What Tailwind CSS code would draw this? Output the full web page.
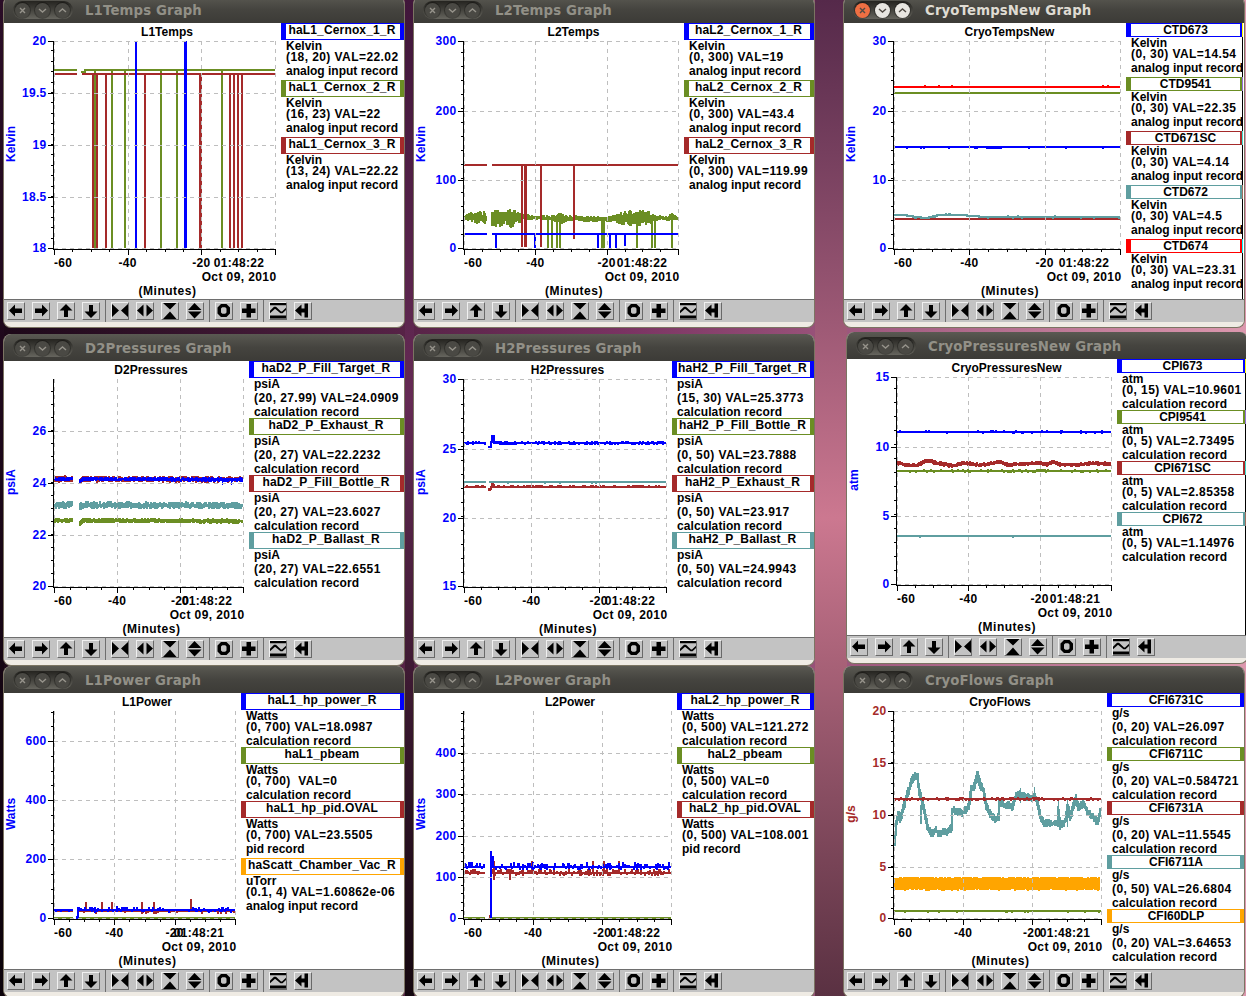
<!DOCTYPE html>
<html lang="en">
<head>
  <meta charset="UTF-8" />
  <meta name="viewport" content="width=device-width, initial-scale=1.0"/>
  <title>Strip charts</title>
  <script src="https://cdn.jsdelivr.net/npm/@tailwindcss/browser@4"></script>
</head>
<body class="relative w-[1246px] h-[996px] overflow-hidden bg-linear-to-r from-[#1c0818] via-[#7a3362] to-[#dc98ae] font-['Liberation_Sans',Arial,sans-serif]">

  <!-- Wallpaper showing between the window columns -->
  <div class="absolute left-0 top-0 w-1 h-full bg-linear-to-b from-[#2a0d26] to-[#0c030a]"></div>
  <div class="absolute left-[405px] top-0 w-[9px] h-full bg-linear-to-b from-[#40163a] via-[#652a54] via-40% to-[#150810]"></div>
  <div class="absolute left-[815px] top-0 w-[32px] h-full bg-linear-to-b from-[#55294a] via-[#cc7890] via-52% to-[#5a3142]"></div>

  <div id="desktop"></div>

  <script>
    const BLUE = "#0000ff", GREEN = "#6b8e23", BROWN = "#a52a2a", TEAL = "#5f9ea0", ORANGE = "#ffa500", RED = "#ff0000";
    const COLORS = [BLUE, GREEN, BROWN, TEAL];

    let seed = 7;
    function rnd() {
      seed = (seed * 16807) % 2147483647;
      return seed / 2147483647;
    }

    function at(pts, x) {
      if (typeof pts === "number") return pts;
      for (let i = 1; i < pts.length; i++) {
        const a = pts[i - 1], b = pts[i];
        if (x <= b[0]) return a[1] + (b[1] - a[1]) * (x - a[0]) / (b[0] - a[0]);
      }
      return pts[pts.length - 1][1];
    }

    // overlapping 2px wide vertical strokes between y-up and y+down
    function noisy(color, pts, x0, x1, up = 0, down = 0, p = 1) {
      let d = "";
      for (let x = x0; x < x1 - 1; x++) {
        const y = at(pts, x), next = at(pts, x + 1);
        const u = rnd() < p ? rnd() * at(up, x) : 0, w = rnd() < p ? rnd() * at(down, x) : 0;
        d += `M${x + 1} ${Math.round(Math.min(y, next) - 1 - u)}V${Math.round(Math.max(y, next) + 1 + w)}`;
      }
      return `<path d="${d}" stroke="${color}" stroke-width="2" fill="none"/>`;
    }

    function bars(color, xs, y0, y1, w = 2) {
      return xs.map(x => `<path d="M${x} ${y0}V${y1}" stroke="${color}" stroke-width="${w}"/>`).join("");
    }

    const flow = [[50,149],[52,130],[54,120],[56,127],[59,114],[63,100],[66,92],[69,84],[73,83],[75,100],[78,110],[81,124],[83,134],[87,142],[91,137],[96,142],[99,137],[103,140],[107,135],[108,117],[113,119],[118,120],[123,115],[125,110],[127,94],[129,95],[133,82],[136,92],[139,97],[142,114],[146,122],[151,127],[154,124],[155,110],[163,112],[168,114],[171,104],[176,100],[181,104],[186,105],[190,104],[193,109],[196,124],[199,130],[204,130],[213,130],[214,117],[216,133],[221,127],[223,114],[226,124],[231,105],[234,114],[239,110],[244,120],[249,124],[253,129],[257,114]];

    const windows = [
      {
        x: 3, y: -4, title: "L1Temps", unit: "Kelvin", legend: 277, div: 5, time: "01:48:22",
        yl: [["20", 18], ["19.5", 70], ["19", 122], ["18.5", 174], ["18", 225]],
        items: [["haL1_Cernox_1_R", "Kelvin", "(18, 20) VAL=22.02", "analog input record"],
                ["haL1_Cernox_2_R", "Kelvin", "(16, 23) VAL=22", "analog input record"],
                ["haL1_Cernox_3_R", "Kelvin", "(13, 24) VAL=22.22", "analog input record"]],
        plot: () => noisy(GREEN, 47, 50, 73) + noisy(GREEN, [[77, 49], [80, 49], [81, 47], [271, 47]], 77, 271) +
          bars(GREEN, [91, 108, 121, 157, 173, 218], 47, 225) +
          noisy(BROWN, 51, 50, 73) + noisy(BROWN, 51, 78, 271) +
          bars(BROWN, [89, 93, 102, 141, 226, 230, 234, 238], 51, 225) + bars(BROWN, [196.5], 51, 225, 3) +
          bars(BLUE, [132], 18, 225) + bars(BLUE, [181.5], 18, 225, 3)
      },
      {
        x: 413, y: -4, title: "L2Temps", unit: "Kelvin", legend: 270, div: 5, time: "01:48:22",
        yl: [["300", 18], ["200", 88], ["100", 157], ["0", 225]],
        items: [["haL2_Cernox_1_R", "Kelvin", "(0, 300) VAL=19", "analog input record"],
                ["haL2_Cernox_2_R", "Kelvin", "(0, 300) VAL=43.4", "analog input record"],
                ["haL2_Cernox_3_R", "Kelvin", "(0, 300) VAL=119.99", "analog input record"]],
        plot: () => {
          const amp = [[50, 1], [54, 4], [60, 6], [70, 6], [73, 5], [77, 9], [86, 9], [90, 6], [96, 10], [104, 6], [108, 2], [125, 1.5], [135, 2], [146, 5], [154, 2], [172, 3], [190, 1.5], [200, 4], [212, 7], [225, 8], [236, 6], [243, 2], [250, 1], [257, 4], [264, 1]];
          const mid = [[50, 194], [80, 195], [110, 194], [130, 195], [180, 196], [195, 196], [215, 195], [264, 195]];
          const core = amp.map(([x, a]) => [x, Math.max(0, a - 3.5)]);
          return [[50, 73], [77, 264]].map(([a, b]) => noisy(GREEN, mid, a, b, amp, amp) +
            core.slice(1).map((_, i) => [core[i], core[i + 1]]).filter(([s, e]) => s[0] >= a && e[0] <= b)
              .map(([s, e]) => `<path fill="${GREEN}" d="M${s[0]} ${194.5 - s[1]}L${e[0]} ${194.5 - e[1]}V${195 + e[1]}L${s[0]} ${195 + s[1]}Z"/>`).join("")).join("") +
            bars(GREEN, [134, 138, 143, 146, 223, 238, 241, 258], 195, 225) + bars(GREEN, [189], 195, 225, 4) +
            noisy(BROWN, 142, 50, 73) + noisy(BROWN, 142, 78, 264) +
            bars(BROWN, [108, 127], 142, 224) + bars(BROWN, [111.5], 142, 224, 3) + bars(BROWN, [160], 142, 216) +
            noisy(BLUE, 211, 50, 73) + noisy(BLUE, 211, 78, 264) + bars(BLUE, [82, 121, 184, 196, 202], 211, 225) + bars(BLUE, [211], 211, 223);
        }
      },
      {
        x: 843, y: -4, title: "CryoTempsNew", unit: "Kelvin", legend: 282, div: 5, time: "01:48:22", active: true,
        edge: ["#ffff00", "#9370db", "#40e0d0", "#a07060", "#00ffff"],
        yl: [["30", 18], ["20", 88], ["10", 157], ["0", 225]],
        colors: [BLUE, GREEN, BROWN, TEAL, RED],
        items: [["CTD673", "Kelvin", "(0, 30) VAL=14.54", "analog input record"],
                ["CTD9541", "Kelvin", "(0, 30) VAL=22.35", "analog input record"],
                ["CTD671SC", "Kelvin", "(0, 30) VAL=4.14", "analog input record"],
                ["CTD672", "Kelvin", "(0, 30) VAL=4.5", "analog input record"],
                ["CTD674", "Kelvin", "(0, 30) VAL=23.31", "analog input record"]],
        plot: () => noisy(RED, 64, 50, 276, 1, 0, .03) + noisy(GREEN, 70, 50, 276) + noisy(BLUE, 124, 50, 276, 0, 1, .08) + bars(BLUE, [150], 124, 126, 16) +
          noisy(BROWN, 196, 50, 276) + noisy(TEAL, [[50, 192], [60, 192], [72, 194], [82, 195], [95, 192], [117, 192], [140, 194], [276, 194]], 50, 276, 1, 1, .05)
      },
      {
        x: 3, y: 334, title: "D2Pressures", unit: "psiA", legend: 245, div: 4, time: "01:48:22",
        yl: [["26", 70], ["24", 122], ["22", 174], ["20", 225]],
        items: [["haD2_P_Fill_Target_R", "psiA", "(20, 27.99) VAL=24.0909", "calculation record"],
                ["haD2_P_Exhaust_R", "psiA", "(20, 27) VAL=22.2232", "calculation record"],
                ["haD2_P_Fill_Bottle_R", "psiA", "(20, 27) VAL=23.6027", "calculation record"],
                ["haD2_P_Ballast_R", "psiA", "(20, 27) VAL=22.6551", "calculation record"]],
        plot: () => [[50, 69], [75, 239]].map(([a, b]) => {
          const k = y => a === 75 ? [[75, y + 3], [78, y], [239, y + .6]] : y;
          return noisy(BROWN, k(118), a, b, 2.6, 2.6) + noisy(BLUE, k(118), a, b, 1.3, 1.3) +
            noisy(TEAL, k(144), a, b, 2.9, 2.9) + noisy(GREEN, k(159.5), a, b, 1.7, 1.7);
        }).join("") + bars(BLUE, [218, 227], 119, 124, 1)
      },
      {
        x: 413, y: 334, title: "H2Pressures", unit: "psiA", legend: 258, div: 5, time: "01:48:22",
        yl: [["30", 18], ["25", 88], ["20", 157], ["15", 225]],
        items: [["haH2_P_Fill_Target_R", "psiA", "(15, 30) VAL=25.3773", "calculation record"],
                ["haH2_P_Fill_Bottle_R", "psiA", "(0, 50) VAL=23.7888", "calculation record"],
                ["haH2_P_Exhaust_R", "psiA", "(0, 50) VAL=23.917", "calculation record"],
                ["haH2_P_Ballast_R", "psiA", "(0, 50) VAL=24.9943", "calculation record"]],
        plot: () => noisy(TEAL, 121, 50, 72) + noisy(TEAL, 121, 75, 252, 0, 1, .04) +
          noisy(GREEN, 126, 50, 72) + noisy(GREEN, 126, 79, 252) +
          noisy(BROWN, 125.6, 50, 72, 1, 0, .4) + noisy(BROWN, [[74, 129], [76, 128], [78, 123], [80, 125.6], [252, 125.6]], 74, 252, 1, 0, .3) +
          noisy(BLUE, 82, 50, 72, 1, 1, .5) + noisy(BLUE, [[74, 86], [76, 86], [78, 75], [79, 75], [80, 82], [252, 82]], 74, 252, 1, 1.2, .45)
      },
      {
        x: 846, y: 332, title: "CryoPressuresNew", unit: "atm", legend: 270, div: 5, time: "01:48:21",
        edge: ["#ffff00", "#9370db", "#40e0d0", "#a07060"],
        yl: [["15", 18], ["10", 88], ["5", 157], ["0", 225]],
        items: [["CPI673", "atm", "(0, 15) VAL=10.9601", "calculation record"],
                ["CPI9541", "atm", "(0, 5) VAL=2.73495", "calculation record"],
                ["CPI671SC", "atm", "(0, 5) VAL=2.85358", "calculation record"],
                ["CPI672", "atm", "(0, 5) VAL=1.14976", "calculation record"]],
        plot: () => noisy(BLUE, 73, 50, 264, 1, 1, .15) + noisy(GREEN, 112, 50, 264, 1, 1, .22) + noisy(TEAL, 177, 50, 264, 0, 1, .02) +
          noisy(BROWN, [[50, 104], [60, 106], [70, 106], [78, 102], [83, 102], [90, 104], [105, 107], [116, 104], [132, 106], [146, 104], [152, 103], [160, 106], [175, 105], [192, 104], [200, 106], [205, 103], [216, 106], [230, 106], [242, 104], [264, 105]], 50, 264, 1.4, 1.4)
      },
      {
        x: 3, y: 666, title: "L1Power", unit: "Watts", legend: 237, div: 4, time: "01:48:21",
        yl: [["600", 48], ["400", 107], ["200", 166], ["0", 225]],
        colors: [BLUE, GREEN, BROWN, ORANGE],
        items: [["haL1_hp_power_R", "Watts", "(0, 700) VAL=18.0987", "calculation record"],
                ["haL1_pbeam", "Watts", "(0, 700) &nbsp;VAL=0", "calculation record"],
                ["haL1_hp_pid.OVAL", "Watts", "(0, 700) VAL=23.5505", "pid record"],
                ["haScatt_Chamber_Vac_R", "uTorr", "(0.1, 4) VAL=1.60862e-06", "analog input record"]],
        plot: () => noisy(GREEN, 225, 50, 69) + noisy(GREEN, 225, 74, 231) +
          noisy(BROWN, 217.5, 50, 69, 0, 1.5, .2) + noisy(BROWN, 217.5, 75, 231, 1, 2.6, .25) +
          bars(BROWN, [82, 98, 108, 138, 150], 208.5, 217) + bars(BROWN, [187], 206, 217) +
          noisy(BLUE, 217, 50, 69, 2.5, 1, .2) + noisy(BLUE, [[72, 224], [73, 224], [74, 215], [76, 217], [231, 217]], 72, 231, 2.6, 1.6, .25)
      },
      {
        x: 413, y: 666, title: "L2Power", unit: "Watts", legend: 263, div: 5, time: "01:48:22",
        yl: [["400", 60], ["300", 101], ["200", 143], ["100", 184], ["0", 225]],
        items: [["haL2_hp_power_R", "Watts", "(0, 500) VAL=121.272", "calculation record"],
                ["haL2_pbeam", "Watts", "(0, 500) VAL=0", "calculation record"],
                ["haL2_hp_pid.OVAL", "Watts", "(0, 500) VAL=108.001", "pid record"]],
        plot: () => noisy(GREEN, 225, 50, 71) + noisy(GREEN, 225, 77, 257) +
          noisy(BROWN, 179.5, 50, 71, 2.5, 2, .4) + noisy(BROWN, 179.5, 77, 257, 3, 3, .3) +
          bars(BROWN, [80, 118, 179, 190, 204.5], 168, 180) + bars(BROWN, [80, 96], 180, 187) + bars(BROWN, [75.5], 222, 225) +
          noisy(BLUE, 173.5, 50, 71, 4, 2, .5) + noisy(BLUE, 173.5, 77, 257, 3.2, 2.6, .35) +
          bars(BLUE, [77], 158, 224.5) + bars(BLUE, [79], 163, 174)
      },
      {
        x: 843, y: 666, title: "CryoFlows", unit: "g/s", legend: 263, div: 5, time: "01:48:21", axis: BROWN,
        yl: [["20", 18], ["15", 70], ["10", 122], ["5", 174], ["0", 225]],
        colors: [BLUE, GREEN, BROWN, TEAL, ORANGE],
        items: [["CFI6731C", "g/s", "(0, 20) VAL=26.097", "calculation record"],
                ["CFI6711C", "g/s", "(0, 20) VAL=0.584721", "calculation record"],
                ["CFI6731A", "g/s", "(0, 20) VAL=11.5545", "calculation record"],
                ["CFI6711A", "g/s", "(0, 50) VAL=26.6804", "calculation record"],
                ["CFI60DLP", "g/s", "(0, 20) VAL=3.64653", "calculation record"]],
        plot: () => noisy(TEAL, flow, 50, 257, 3.4, 3.4) +
          bars(TEAL, [77], 112, 131) + bars(TEAL, [176], 95, 110, 1) + bars(TEAL, [190], 94, 108, 1) + bars(TEAL, [214, 223], 107, 134, 1) +
          noisy(BROWN, 106, 50, 257, 1, 1, .35) +
          `<path d="M50 190.5H256" stroke="${ORANGE}" stroke-width="11"/>` +
          noisy(ORANGE, 186, 50, 256, 1.4, 0) + noisy(ORANGE, 195, 50, 256, 0, 1.6) +
          noisy(GREEN, 218, 50, 257, 0, 1.4, .1)
      }
    ];

    function chart(w) {
      const R = w.legend - 6, L = 50, B = 225, axis = w.axis || BLUE;
      let grid = "", ticks = "", labels = "";
      const step = w.yl[1][1] - w.yl[0][1];
      const third = (R - L) / 3;
      for (let i = 0; i < 4; i++) grid += `<path d="M${Math.round(L + third * i) + .5} 18V${B}"/>`;
      for (const [t, y] of w.yl) {
        grid += `<path d="M${L} ${y + .5}H${R}"/>`;
        ticks += `<path d="M44 ${y + .5}H50"/>`;
        labels += `<text x="42.5" y="${y + 4}" text-anchor="end" fill="${axis}" letter-spacing=".3">${t}</text>`;
      }
      for (let y = B, s = step / w.div; y >= 17.5; y -= s) ticks += `<path d="M47 ${Math.round(y) + .5}H50"/>`;
      for (let i = 0; i <= 12; i++) ticks += `<path d="M${Math.round(L + third * i / 4) + .5} 226V${i % 4 ? 229 : 232}"/>`;
      const mid = (L + R) / 2 + 2.5;
      return `<svg class="shrink-0 block" width="${w.legend}" height="276" font-size="12" font-weight="700">
        <g shape-rendering="crispEdges">${w.plot()}
          <g stroke="#bebebe" stroke-dasharray="4 4" fill="none">${grid}</g>
          <g stroke="#000">${ticks}<path d="M49.5 18V227M49 226.5H${R + 1}"/></g>
        </g>
        ${labels}
        <text x="${mid}" y="13" text-anchor="middle">${w.title}</text>
        <text x="50" y="244" letter-spacing=".3">-60</text>
        <text x="${L + third}" y="244" text-anchor="middle" letter-spacing=".3">-40</text>
        <text x="${L + third * 2}" y="244" text-anchor="middle" letter-spacing=".3">-20</text>
        <text x="${R - 36}" y="244" text-anchor="middle" letter-spacing=".3">${w.time}</text>
        <text x="${R + 1.5}" y="258" text-anchor="end" letter-spacing=".4">Oct 09, 2010</text>
        <text x="${mid + .5}" y="272" text-anchor="middle" letter-spacing=".5">(Minutes)</text>
        <text transform="translate(11 121) rotate(-90)" text-anchor="middle" fill="${axis}">${w.unit}</text>
      </svg>`;
    }

    // line heights follow the ink: rows with descenders are 3px taller
    function legend(w) {
      const colors = w.colors || COLORS;
      return w.items.map(([name, unit, range, rec], i) => {
        const tall = name.includes("_");
        return `<div class="relative">
          <div class="${tall ? "h-[17px] tracking-[.15px] pr-0.5" : "h-[14px]"} ${w.edge ? "border-r-2" : "border-r-4"} border-l-5 border-y leading-[13px] flex justify-center" style="border-color:${colors[i]}"><span>${name}</span></div>
          <p class="-mt-px pl-[5px] ${/[pg]/.test(unit) ? "h-[14px]" : "h-[11px]"}">${unit}</p>
          <p class="pl-[5px] h-[14px] tracking-[.43px]">${range}</p>
          <p class="pl-[5px] overflow-x-clip ${/[pg]/.test(rec) ? "h-4" : "h-[13px] tracking-[.1px]"}">${rec}</p>
          ${w.edge ? `<div class="absolute top-0 -right-px w-px h-[14px]" style="background:${w.edge[i]}"></div>` : ""}
        </div>`;
      }).join("");
    }

    const icons = [
      ["M2 8.5L8 2.5V6.5H15V11H8V14.5Z", "M16 8.5L10 2.5V6.5H3V11H10V14.5Z", "M9 2L15.5 8.5H11V15H7V8.5H2.5Z", "M9 16L15.5 9.5H11V3H7V9.5H2.5Z"],
      ["M1 2L8 8.5L1 15ZM17 2L10 8.5L17 15Z", "M1 8.5L7.5 2.5V14.5ZM10.5 2.5L17 8.5L10.5 14.5Z", "M2 1H15.5L9 7.5ZM9 9.5L15.5 17H2Z", "M8.5 1L15.5 8H2ZM2 9.5H15.5L8.5 16.5Z"],
      ["M6 2H11.5L15 5.5V11.5L11.5 15H6L2.5 11.5V5.5ZM7.3 5.3L6 6.6V10.4L7.3 11.7H10.2L11.5 10.4V6.6L10.2 5.3Z", "M6.5 2H11V6.5H15.5V11H11V15.5H6.5V11H2V6.5H6.5Z"],
      ["M1 1H17V3.2H1ZM1 13.5H17V16.5H1ZM1 8.8L5 4.8H7L12 9.5H13L17 5.8V8L13.5 11.3H11.5L6.3 6.9H5.8L1 11.3Z", "M1 8.5L7.5 2.5V6.5H10.5V1.5H14V15.5H10.5V10.5H7.5V14.5Z"]
    ];
    const toolbar = icons.map(g => `<div class="flex gap-[7px]">` + g.map(d =>
      `<button class="size-[18px] border border-t-[#f0f0f0] border-l-[#f0f0f0] border-r-[#696969] border-b-[#696969] bg-[#c3c3c3]"><svg class="-m-px block" width="18" height="18"><path fill-rule="evenodd" d="${d}"/></svg></button>`).join("") + `</div>`)
      .join(`<div class="w-px h-[22px] mx-[5px] bg-[#6e6e6e]"></div>`);

    const glyphs = ["M5 5L10 10M10 5L5 10", "M4 6L7.5 9L11 6", "M4 9L7.5 6L11 9"];
    function caption(w) {
      return `<div class="h-[27px] flex items-center pl-[9px] gap-3 bg-linear-to-b from-[#5a5952] via-[#45443f] to-[#3c3b37]">
        <div class="flex items-center gap-[5px] w-[60px] h-[18px] pl-0.5 mt-px rounded-full bg-linear-to-b from-[#252420] to-[#66655e]">` +
        glyphs.map((d, i) => `<svg class="${w.active ? (i ? "bg-[#e8e6e1]" : "bg-[#ee6f43]") : "bg-[#4a4944]"} rounded-full ring-1 ring-black/30" width="15" height="15"><path d="${d}" fill="none" stroke="${w.active ? "#504a44" : "#96938b"}" stroke-width="1.4"/></svg>`).join("") +
        `</div>
        <h2 class="mt-0.5 font-['DejaVu_Sans',sans-serif] font-bold text-[13.3px] tracking-[.12px] leading-none whitespace-nowrap ${w.active ? "text-[#dfdbd2]" : "text-[#929087]"}">${w.title} Graph</h2>
      </div>`;
    }

    document.getElementById("desktop").innerHTML = windows.map(w => `
      <section class="absolute w-[402px] rounded-lg border-x border-b border-[#7b7462] bg-[#efebe4] overflow-hidden" style="left:${w.x}px;top:${w.y}px">
        ${caption(w)}
        <div class="flex h-[276px] bg-white overflow-hidden">
          ${chart(w)}
          <div class="flex-1 min-w-0 text-xs font-bold leading-[14px] whitespace-nowrap ${w.edge ? "mr-px border-r border-black" : ""}">${legend(w)}</div>
        </div>
        <div class="flex items-center h-[23px] pl-[3px] border-t border-[#6e6e6e] bg-[#c3c3c3]">${toolbar}</div>
        <div class="h-[5px]"></div>
      </section>`).join("");
  </script>

</body>
</html>
